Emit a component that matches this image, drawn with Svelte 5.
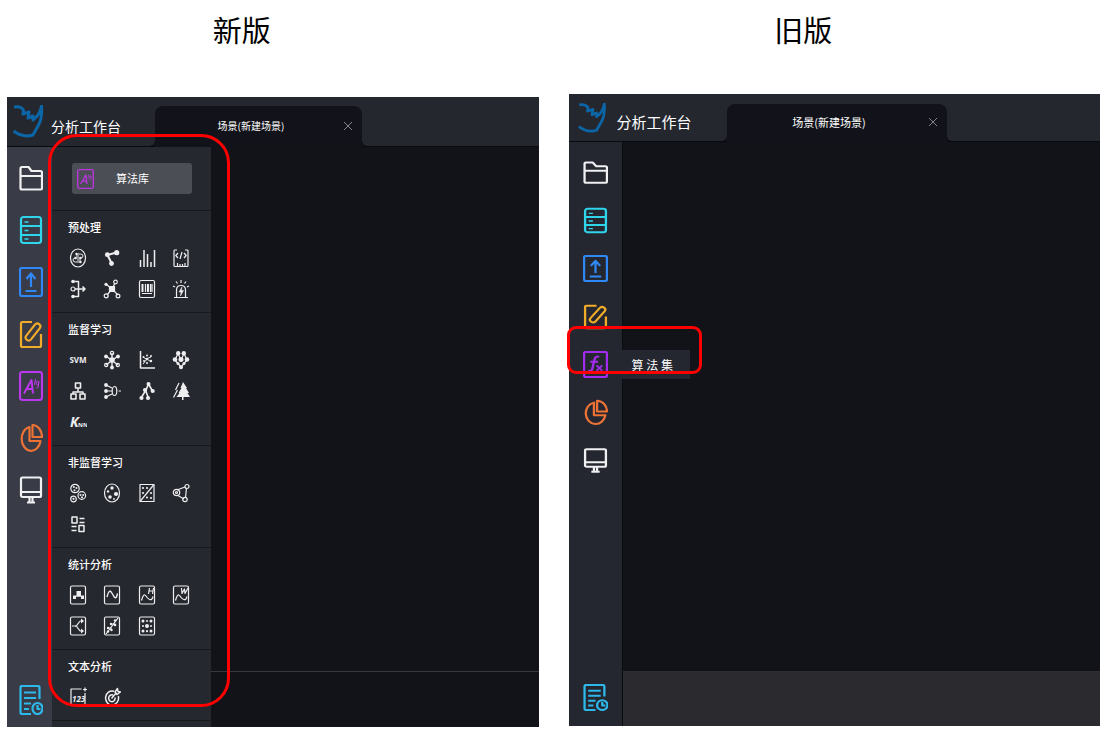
<script>
  const side = {
    folder: '<path d="M1.500 5.500q0-1.500 1.500-1.500h6.500l3 4h9q1.500 0 1.500 1.500v15.500q0 1.500-1.500 1.500H3q-1.500 0-1.500-1.500zM1.500 13h21"/>',
    data: '<rect x="2" y="2" width="20" height="26" rx="2.500"/><path d="M2 11h20M2 20h20"/><path d="M5.500 7h4M5.500 15.500h4M5.500 24h4" stroke-width="1.500"/>',
    upload: '<rect x="1" y="1" width="22" height="28" rx="2"/><path d="M12 20V6.500M7.500 12L12 6.500l4.500 5.500M6.500 24h11"/>',
    edit: '<path d="M13 3H3.500Q2 3 2 4.500v22Q2 28 3.500 28h17q1.500 0 1.500-1.500V15"/><rect x="11" y="3" width="6" height="20" rx="3" transform="rotate(38 14 13)"/>',
    alg: '<rect x="1" y="1" width="22" height="28" rx="2.500"/><path d="M5 22.500L12.500 9l1.500 13.500M8 18h6" stroke-width="2"/><g stroke-width="1"><path d="M16.500 8l-1 6"/><ellipse cx="18.300" cy="12" rx="1.200" ry="1.800"/><path d="M20 10l-.8 6q-.5 1.500-2 1"/></g>',
    fx: '<rect x="1" y="1" width="22" height="28" rx="2"/><path d="M15.500 6.500q-3.500-1.500-4.500 3L9 19.500q-.7 3.500-4 2.500M7 12h7.500"/><path d="M13 16l5.500 6M18.500 16L13 22" stroke-width="1.800"/>',
    pie: '<path d="M10.500 4A9.500 12 0 1 0 21.500 18h-11z"/><path d="M13.500 2v12H23A9.500 12 0 0 0 13.500 2z"/>',
    screen: '<rect x="2" y="2.500" width="20" height="19.500" rx="1.500"/><path d="M2 17h20M10.500 22v5M13.500 22v5M8 27.500h8"/>',
    log: '<path d="M12 29H3q-1.500 0-1.500-1.500v-25Q1.500 1 3 1h16q1.500 0 1.500 1.500V14M5 7.500h12M5 13h12M5 18.500h7M5 24h5"/><ellipse cx="18.500" cy="23.500" rx="5" ry="5.500"/><path d="M18.500 20v4h3"/>'
  };
  const dot = (x, y, r = 1.6) => `<circle cx="${x}" cy="${y}" r="${r}" fill="currentColor" stroke="none"/>`;
  const ring = (x, y, r = 2) => `<circle cx="${x}" cy="${y}" r="${r}"/>`;
  const frame = '<rect x="1.500" y="1" width="15" height="18" rx="1.500"/>';
  const wave = '<path d="M3.500 15.500q2-8 4.500-4.500t4 3.500q2 1 3-3"/>';
  const small = {
    convert: '<ellipse cx="9" cy="10" rx="7.500" ry="9"/><path stroke-width="1" d="M8 6h3.500q2.500 0 2.500 2t-2.500 2H6.500Q4 10 4 12t2.500 2H11M7 8h3M8 12h4"/>' + dot(7.5, 6, 1.2) + dot(6.5, 10, 1.2) + dot(11.5, 10, 1.2) + dot(11.5, 14, 1.2),
    link: '<path d="M8.500 15L4.500 7l9-2.500" stroke-width="2"/>' + dot(4.3, 6.7, 2.4) + dot(13.7, 4.7, 2.6) + dot(8.5, 15.5, 2.4),
    bars: '<path d="M2.500 12v7M6 2v17M9.500 6v13M13 14v5M16.500 2v17" stroke-width="1.500"/>',
    code: '<path d="M5 2H2.500Q2 2 2 3v14.500q0 1 1 1h12q1 0 1-1V3q0-1-.5-1H13M5.500 18v-3M8 18v-2M10.500 18v-2M13 18v-3M6 5L3.800 7.500 6 10M12 5l2.200 2.500L12 10M10 4l-2 7"/>',
    flow: '<path d="M5 2.500h4.500v15H5M6 10h10M13.500 7.500L16 10l-2.500 2.500" stroke-width="1.500"/>' + ring(4, 10, 2) + dot(4, 2.5, 1.8) + dot(4, 17.5, 1.8),
    hub: '<path d="M3 5l6 5 3-6M9 10l-5 6M9 10l6 6"/><rect x="6.500" y="7.500" width="5" height="5" fill="currentColor"/>' + ring(12.5, 3, 1.8) + ring(3.2, 16.8) + ring(15, 17, 1.9) + dot(3, 5.3, 1.6),
    barcode: '<rect x="1.500" y="1.500" width="15" height="17" rx="1.500"/><path d="M4 14.500h10" stroke-width="1"/><path d="M4.500 5v8M10 5v8" stroke-width="2"/><path d="M7.500 5v8M12.500 5v8M14 5v8" stroke-width="1.200"/>',
    alarm: '<path d="M4.500 18v-7q0-4.500 4.500-4.500t4.500 4.500v7M2 18.500h14M9 1v3M4 2.500l1.500 2M14 2.500l-1.500 2M1 7l2 1M17 7l-2 1"/><path d="M10 8l-3 5h2l-.5 4 3-5.500H9.500z" fill="currentColor" stroke-width=".5"/>',
    svm: '<text x="9" y="13" text-anchor="middle" font-size="8" font-weight="700">SVM</text>',
    neural: '<path d="M9 3v14M3 6l12 9M15 6L3 15" stroke-width="1.400"/>' + ring(9, 3, 1.7) + dot(9, 10, 2.8) + dot(3, 6.5, 1.9) + dot(15, 6.5, 1.9) + ring(3.2, 15, 1.6) + ring(14.8, 15, 1.6) + dot(9, 17.5, 1.9),
    scatter: '<path d="M2.500 1v17H17" stroke-width="1.500"/><path d="M5 14l4-5 4 3M5 7l3 2 5-2" stroke-width="1"/>' + dot(5.5, 7, 1) + dot(9, 5.5, 1) + dot(13, 6, 1) + dot(9, 9, 1.3) + dot(6, 11, 1) + dot(9, 13, 1) + dot(13, 11, 1.2),
    forest: '<path d="M6 3.500L3 10l6 7 6-7-3-6.500L9 10z"/>' + dot(6.2, 3.3, 2.2) + dot(11.8, 3.3, 2.2) + dot(3, 9.5, 2.3) + dot(9, 9.5, 2.5) + dot(15, 9.5, 2.3) + dot(6, 13.5, 1.5) + dot(12, 13.5, 1.5) + dot(9, 17.3, 2),
    tree: '<path d="M9 7v4M4 13v-2h10v2" stroke-width="1.500"/><g stroke-width="1.600"><rect x="6.500" y="2" width="5" height="5"/><rect x="2" y="13" width="5" height="5"/><rect x="11" y="13" width="5" height="5"/></g>',
    perceptron: '<path d="M3 4l6 3M3 10h6M3 16l6-3M15.500 10H18"/><ellipse cx="11.500" cy="10" rx="2.300" ry="4.500"/>' + dot(3, 4, 1.9) + dot(3, 10, 1.9) + dot(3, 16, 1.9),
    branch: '<path d="M10.500 3L8 9l-5 8M10.500 3l4 7M7.500 9l2.500 7" stroke-width="1.600"/>' + dot(10.5, 3, 2) + dot(7, 9, 2.1) + dot(14.7, 10, 2.1) + dot(3.5, 17, 2.1) + dot(10, 17, 2.1),
    pine: '<path d="M11 1l4 6h-1l3 5h-1.500l2.500 4h-6.500v3h-1.500v-3H4.500l3-4H6.500l3-5H8.500z" fill="currentColor" stroke="none"/><path d="M7 2L3.500 9M5.500 9l-4 7.500"/>',
    knn: '<text x="1" y="15" font-size="14" font-style="italic" font-weight="700">K</text><text x="9" y="15" font-size="6" font-weight="700">NN</text>',
    cluster: ring(6, 5.5, 4.2) + ring(12.8, 12.5, 3.8) + ring(4.5, 16, 2.8) + dot(4.8, 4, 1) + dot(7.5, 5, 1) + dot(5.5, 7.3, 1) + dot(11.5, 12, 1) + dot(14.2, 12, 1) + dot(13, 14.2, 1) + dot(4.5, 15.8, 1.1),
    palette: '<ellipse cx="9" cy="10" rx="7.500" ry="9"/>' + dot(9, 5, 1.7) + dot(5, 8.5, 1.2) + dot(13, 11, 2.1) + dot(7, 14, 1.8) + dot(11, 16, .9),
    split: '<rect x="2" y="1.500" width="14" height="17"/><path d="M2 18.500l14-17"/>' + dot(5, 5, 1.1) + dot(9, 5, 1.1) + dot(5, 10, 1.1) + dot(13, 10, 1.1) + dot(9, 14.5, 1.1) + dot(13, 15, 1.1),
    graph: '<path d="M5 7l8-3M5 12l7 4M14.500 5l-1 10"/>' + ring(4.5, 9.5, 3.2) + ring(4.5, 9.5, 1) + ring(15, 3.5, 2) + ring(13, 16.5, 2.2),
    blocks: '<g stroke-width="1.500"><rect x="3" y="3" width="5" height="6"/><rect x="10" y="11.500" width="5" height="6"/><path d="M10.500 4.500h5M10.500 8.500h5M2.500 12.500h5M2.500 16.500h5"/></g>',
    boxes: frame + '<path d="M4 10.500h3v3.500H4zM7.500 6h4.500v5.500H7.500zM12 10.500h3v3.500h-3zM7 10.500h5.500v1.200H7z" fill="currentColor" stroke="none"/>',
    sine: frame + '<path d="M4 12q2-8.500 4.500-4.500t3 5q2 1.500 3-4" stroke-width="1.400"/>',
    waveH: frame + wave + '<path d="M11.500 3l-1 6M15.500 3l-1 6M11 6h4"/>',
    waveW: frame + wave + '<path d="M9.500 3l.5 5.500L12.500 4l.5 4.500L16 3"/>',
    fork: frame + '<path d="M3 10h3q2 0 3.500-3t4.500-2M6 10q2 0 3.500 3t4.500 2"/><path d="M12 2.500l3 2.500-3 2.500zM12 12.500l3 2.500-3 2.500z" fill="currentColor" stroke="none"/>',
    trend: frame + '<path d="M3 18L15 2"/>' + dot(5, 12, 1.2) + dot(8.5, 14, 1.2) + dot(8, 8, 1.2) + dot(12, 9, 1.3) + dot(12, 4.5, 1.2) + dot(5, 15.5, 1.2) + '<path d="M5 12h3v2M8 8h4v1"/>',
    dice: frame + dot(5, 5, 1.5) + dot(9, 5, 1) + dot(13, 5, 1.5) + dot(5, 10, 1) + dot(9, 10, 2) + dot(13, 10, 1) + dot(5, 15, 1.5) + dot(9, 15.2, 1.1) + dot(13, 15, 1.5),
    digits: '<path d="M12.500 2H2v17M16 6v12M14 2.500h4M16 .5v4"/><text x="3" y="15" font-size="8" font-style="italic" font-weight="700">123</text>',
    target: '<path d="M11 4.300A6.500 7 0 1 0 15.300 9M10 8a3.200 3.500 0 1 0 2 2.500M8.500 11.500L13 6M12 5l2.500-3.500.5 3 2.500.5L14 7.500z" stroke-width="1.500"/>'
  };
  const nav = (kind) => [
    ['folder', '#f0f0f2', '文件'],
    ['data', '#2fd5eb', '数据'],
    ['upload', '#2f88f5', '上传'],
    ['edit', '#f1ac29', '编辑'],
    kind === 'new' ? ['alg', '#bb38ee', '算法库'] : ['fx', '#a22df0', '算法集'],
    ['pie', '#ec7335', '图表'],
    ['screen', '#f0f0f2', '展示']
  ];
  const groups = [
    ['预处理', ['convert', 'link', 'bars', 'code', 'flow', 'hub', 'barcode', 'alarm']],
    ['监督学习', ['svm', 'neural', 'scatter', 'forest', 'tree', 'perceptron', 'branch', 'pine', 'knn']],
    ['非监督学习', ['cluster', 'palette', 'split', 'graph', 'blocks']],
    ['统计分析', ['boxes', 'sine', 'waveH', 'waveW', 'fork', 'trend', 'dice']],
    ['文本分析', ['digits', 'target']]
  ];
</script>

{#snippet sideIcon(name)}
  <svg class="side-icon" viewBox="0 0 24 30" preserveAspectRatio="none" aria-hidden="true">{@html side[name]}</svg>
{/snippet}

{#snippet header()}
  <header>
    <div class="brand">
      <svg class="logo" viewBox="0 0 31 33" aria-hidden="true">
        <path d="M1 2q7-1 9.500 3l-.5 4 6-2-1 6 5-2v4q7-5 8.500-14 1 13-3.500 20l-5 9q-10 3-19.500-4" />
      </svg>
      <span>分析工作台</span>
    </div>
    <div class="tab">
      <span>场景(新建场景)</span>
      <button class="close" aria-label="关闭"><svg viewBox="0 0 10 10"><path d="M1 1l8 8M9 1L1 9" /></svg></button>
    </div>
  </header>
{/snippet}

{#snippet rail(kind)}
  <nav>
    {#each nav(kind) as [name, color, label]}
      <button class="nav-item" style:color aria-label={label}>
        {@render sideIcon(name)}
        {#if name === 'fx'}<span class="tip">算 法 集</span>{/if}
      </button>
    {/each}
    <button class="nav-item last" aria-label="日志">{@render sideIcon('log')}</button>
  </nav>
{/snippet}

<main>
  <section class="version new">
    <h1>新版</h1>
    <div class="window">
      {@render header()}
      <div class="body">
        {@render rail('new')}
        <aside>
          <div class="library">
            <button class="library-button">
              <svg viewBox="0 0 24 30" preserveAspectRatio="none" aria-hidden="true">{@html side.alg}</svg>
              <span>算法库</span>
            </button>
          </div>
          {#each groups as [title, items]}
            <section class="group">
              <h2>{title}</h2>
              <div class="tools">
                {#each items as item}
                  <button class="tool" aria-label={item}>
                    <svg viewBox="0 0 18 20" aria-hidden="true">{@html small[item]}</svg>
                  </button>
                {/each}
              </div>
            </section>
          {/each}
          <div class="end"></div>
        </aside>
        <div class="canvas"><div class="stage"></div><div class="dock"></div></div>
      </div>
      <div class="mark"></div>
    </div>
  </section>

  <section class="version old">
    <h1>旧版</h1>
    <div class="window">
      {@render header()}
      <div class="body">
        {@render rail('old')}
        <div class="canvas"><div class="stage"></div><div class="dock"></div></div>
      </div>
      <div class="mark"></div>
    </div>
  </section>
</main>

<style>
  :global(body) { background: #fff; }
  main, main :global(*) { box-sizing: border-box; }
  main {
    display: grid;
    grid-template-columns: 1fr 1fr;
    gap: 30px;
    min-height: 100vh;
    padding: 0 11px 10px 7px;
    font-family: "Noto Sans CJK SC", "Noto Sans", sans-serif;
    color: #fff;
  }
  h1, h2 { margin: 0; font-weight: 400; }
  button { border: 0; padding: 0; background: none; color: inherit; font: inherit; }
  svg { display: block; fill: none; stroke: currentColor; stroke-linejoin: round; }
  svg :global(text) { fill: currentColor; stroke: none; font-family: "Open Sans", sans-serif; }
  .version { display: flex; flex-direction: column; }
  h1 {
    margin-bottom: 39px;
    padding-right: 62px;
    color: #000;
    font-size: 29px;
    line-height: 58px;
    text-align: center;
  }
  .window { position: relative; flex: 1; display: flex; flex-direction: column; background: #121318; }
  header {
    display: flex;
    align-items: flex-end;
    height: 50px;
    background: #25272f;
    border-bottom: 1px solid #090a0d;
  }
  .brand { display: flex; align-items: center; align-self: stretch; gap: 7px; width: 148px; padding-left: 6px; font-size: 14px; }
  .brand span { padding-top: 8px; }
  .logo { width: 31px; height: 33px; stroke: #0c65a6; stroke-width: 3; }
  .tab {
    position: relative;
    display: flex;
    align-items: center;
    width: 207px;
    height: 41px;
    margin-bottom: -1px;
    padding: 0 9px 2px 4px;
    border-radius: 8px 8px 0 0;
    background: #12131a;
    font-size: 10px;
  }
  .tab::before, .tab::after { content: ""; position: absolute; bottom: 1px; width: 6px; height: 6px; }
  .tab::before { right: 100%; background: radial-gradient(circle at 0 0, transparent 6px, #12131a 6px); }
  .tab::after { left: 100%; background: radial-gradient(circle at 100% 0, transparent 6px, #12131a 6px); }
  .tab span { flex: 1; text-align: center; }
  .close svg { width: 10px; height: 10px; stroke: #85868c; }
  .body { flex: 1; display: flex; }
  nav { display: flex; flex-direction: column; width: 45px; padding: 5px 0 1px 2px; background: #393b46; }
  .nav-item { position: relative; display: flex; align-items: center; justify-content: center; height: 52px; }
  .side-icon { width: 24px; height: 30px; stroke-width: 2.2; }
  .last { margin-top: auto; color: #2db9ea; }
  aside { width: 159px; background: #26282f; }
  .library { padding: 16px 19px 16px 20px; }
  .library-button {
    display: flex;
    align-items: center;
    gap: 22px;
    width: 100%;
    height: 31px;
    padding-left: 5px;
    border-radius: 3px;
    background: #4c4e56;
    font-size: 11px;
  }
  .library-button span { padding-bottom: 2px; }
  .library-button svg { width: 17px; height: 20px; color: #b836dc; stroke-width: 2; }
  .group { padding: 6px 14px 8px 16px; border-top: 1px solid #17191e; }
  h2 { margin-bottom: 5px; font-size: 11px; font-weight: 500; line-height: 20px; }
  .tools { display: grid; grid-template-columns: repeat(4, 1fr); margin-right: -8px; }
  .tool { display: flex; align-items: center; height: 31px; padding-left: 1px; color: #eeeef0; }
  .tool svg { width: 18px; height: 20px; stroke-width: 1.2; }
  .end { border-top: 1px solid #17191e; }
  .canvas { flex: 1; display: flex; flex-direction: column; }
  .stage { flex: 1; }
  .dock { height: 56px; border-top: 1px solid #38393e; }
  .mark {
    position: absolute;
    top: 37px;
    left: 41px;
    width: 182px;
    height: 573px;
    border: 3px solid #fe0000;
    border-radius: 29px;
    pointer-events: none;
  }
  .old { padding-bottom: 1px; }
  .old h1 { margin-bottom: 36px; }
  .old header { height: 48px; }
  .old .brand { gap: 9px; width: 158px; padding-left: 8px; font-size: 15px; }
  .old .logo { width: 31px; height: 30px; }
  .old .tab { width: 220px; height: 38px; font-size: 11px; }
  .old nav { width: 54px; padding: 6px 0 5px; background: #252730; border-right: 1px solid #0b0c10; }
  .old .nav-item { height: 48px; }
  .old .side-icon { width: 25px; height: 27px; }
  .old .dock { height: 55px; background: #2b2b2f; border-color: #2f2f33; }
  .tip {
    position: absolute;
    top: 10px;
    left: 100%;
    padding: 0 17px 0 10px;
    background: #252730;
    color: #fff;
    font-size: 12px;
    line-height: 29px;
    white-space: nowrap;
  }
  .old .mark { top: 232px; left: -2px; width: 135px; height: 48px; border-radius: 9px; }
</style>
